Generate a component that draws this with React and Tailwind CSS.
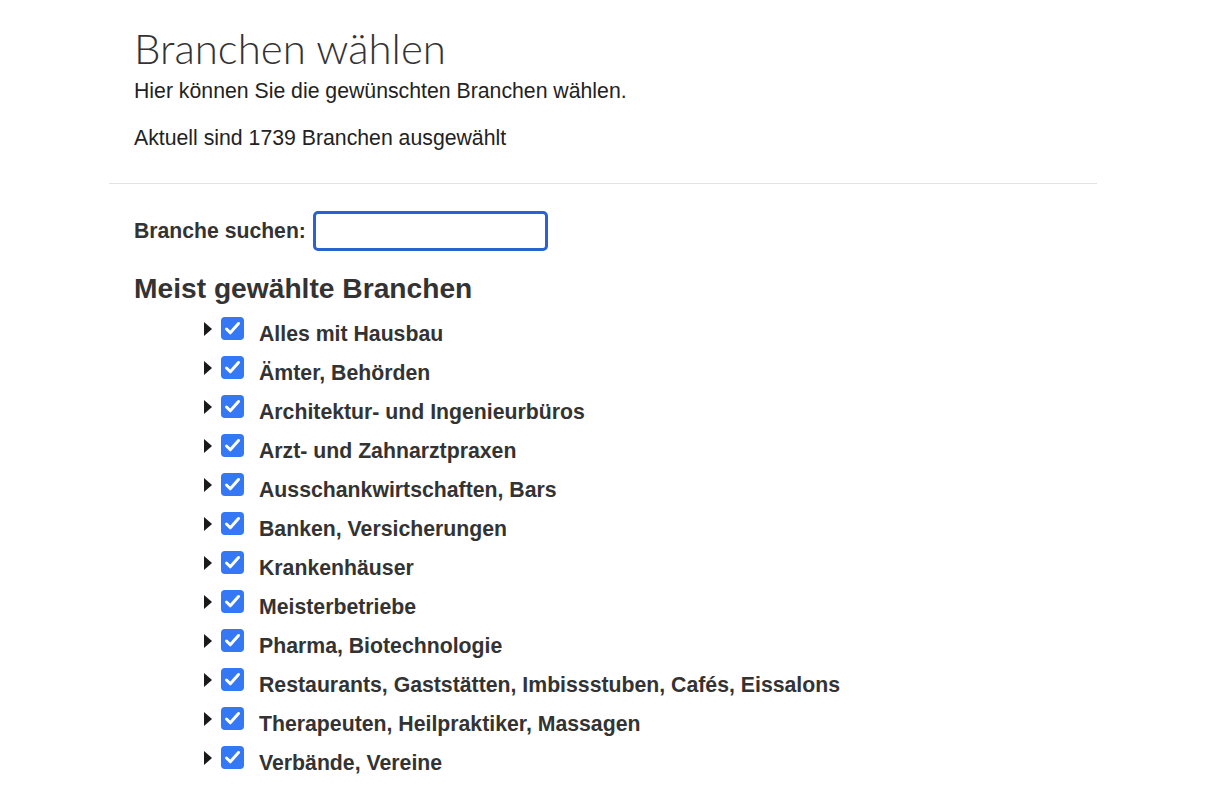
import React from 'react';

const branchen = [
  'Alles mit Hausbau',
  'Ämter, Behörden',
  'Architektur- und Ingenieurbüros',
  'Arzt- und Zahnarztpraxen',
  'Ausschankwirtschaften, Bars',
  'Banken, Versicherungen',
  'Krankenhäuser',
  'Meisterbetriebe',
  'Pharma, Biotechnologie',
  'Restaurants, Gaststätten, Imbissstuben, Cafés, Eissalons',
  'Therapeuten, Heilpraktiker, Massagen',
  'Verbände, Vereine',
];

const Checkbox = () => (
  <span className="flex h-[23px] w-[23px] items-center justify-center rounded-[4px] bg-[#3478f6]">
    <svg width="23" height="23" viewBox="0 0 23 23" fill="none">
      <path d="M5.5 12l3.8 3.8L17.5 6.5" stroke="#fff" strokeWidth="3" strokeLinecap="round" strokeLinejoin="round" />
    </svg>
  </span>
);

const Row = ({ label }) => (
  <li className="flex h-[39px] items-center">
    <span className="mr-[9px] h-0 w-0 border-y-[7px] border-l-[8px] border-y-transparent border-l-[#1a1a1a]" />
    <Checkbox />
    <span className="ml-[15px] mt-[11px] text-[21.25px] leading-[26px] font-bold text-[#333]">{label}</span>
  </li>
);

const App = () => {
  return (
    <div className="min-h-screen bg-white font-['Liberation_Sans',Arial,sans-serif] text-[#333]">
      <div className="ml-[109px] w-[988px]">
        <div className="px-[25px] pt-[22px] pb-[32px]">
          <h1 className="font-['Lato',sans-serif] text-[42px] leading-[52px] font-light text-[#333]">
            Branchen wählen
          </h1>
          <p className="mt-[4px] text-[21.25px] leading-[26px] text-[#222]">
            Hier können Sie die gewünschten Branchen wählen.
          </p>
          <p className="mt-[21px] text-[21.25px] leading-[26px] text-[#222]">
            Aktuell sind 1739 Branchen ausgewählt
          </p>
        </div>
        <div className="border-t border-[#e3e3e3]" />
        <div className="px-[25px] pt-[27px]">
          <div className="flex items-center">
            <label className="text-[21.2px] font-bold">Branche suchen:</label>
            <input
              type="text"
              className="ml-[7px] h-[40px] w-[235px] rounded-[5px] border-[3px] border-[#2b62d0] outline-none"
            />
          </div>
          <h2 className="mt-[20px] text-[28.2px] leading-[34px] font-bold">
            Meist gewählte Branchen
          </h2>
          <ul className="mt-[4px] pl-[70px]">
            {branchen.map((b) => (
              <Row key={b} label={b} />
            ))}
          </ul>
        </div>
      </div>
    </div>
  );
};

export default App;
